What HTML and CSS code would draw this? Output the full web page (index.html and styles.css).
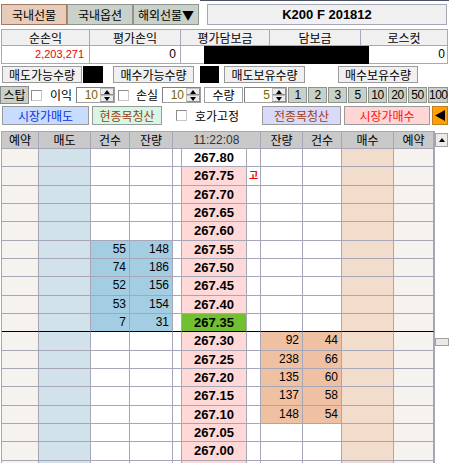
FILE: index.html
```html
<!DOCTYPE html>
<html lang="ko">
<head>
<meta charset="utf-8">
<title>호가주문</title>
<link rel="stylesheet" href="styles.css">
</head>
<body>
<div class="topline"></div>
<div class="row-a">
  <div class="tab on">국내선물</div>
  <div class="tab">국내옵션</div>
  <div class="tab">해외선물▼</div>
  <div class="k200">K200 F 201812</div>
</div>

<div class="pl-head">
  <div>순손익</div><div>평가손익</div><div>평가담보금</div><div>담보금</div><div>로스컷</div>
</div>
<div class="pl-val">
  <div class="v v1 red">2,203,271</div>
  <div class="v v2">0</div>
  <div class="v v3"></div>
  <div class="blk"></div>
  <div class="v v5">0</div>
</div>

<div class="row-d">
  <div class="lbl l1">매도가능수량</div><div class="qv q1"><span class="bk"></span></div>
  <div class="lbl l2">매수가능수량</div><div class="qv q2"><span class="bk"></span></div>
  <div class="lbl l3">매도보유수량</div><div class="qv q3"></div>
  <div class="lbl l4">매수보유수량</div><div class="qv q4"></div>
</div>

<div class="row-e">
  <div class="stop">스탑</div>
  <span class="chk c1"></span><span class="txt t1">이익</span>
  <div class="spin s1"><span class="sv">10</span><span class="sb"><span class="sbh"><i class="up"></i></span><span class="sbh"><i class="dn"></i></span></span></div>
  <span class="chk c2"></span><span class="txt t2">손실</span>
  <div class="spin s2"><span class="sv">10</span><span class="sb"><span class="sbh"><i class="up"></i></span><span class="sbh"><i class="dn"></i></span></span></div>
  <div class="qlabel">수량</div>
  <div class="spin s3"><span class="sv">5</span><span class="sb"><span class="sbh"><i class="up"></i></span><span class="sbh"><i class="dn"></i></span></span></div>
  <div class="qbtns"><span>1</span><span>2</span><span>3</span><span>5</span><span>10</span><span>20</span><span>50</span><span>100</span></div>
</div>

<div class="row-f">
  <div class="ob mkt-sell">시장가매도</div>
  <div class="ob clr-cur">현종목청산</div>
  <span class="chk c3"></span><span class="txt t3">호가고정</span>
  <div class="ob clr-all">전종목청산</div>
  <div class="ob mkt-buy">시장가매수</div>
  <div class="ob arrow"><svg width="14" height="17" viewBox="0 0 14 17"><polygon points="2,8.5 12,3 12,14" fill="#000"/></svg></div>
</div>

<div class="board">
  <div class="grid">
    <div class="row hd">
      <span class="c">예약</span><span class="c">매도</span><span class="c">건수</span><span class="c">잔량</span><span class="c time">11:22:08</span><span class="c">잔량</span><span class="c">건수</span><span class="c">매수</span><span class="c">예약</span>
    </div>
    <div class="row">
      <span class="c rv"></span><span class="c sd"></span><span class="c n"></span><span class="c n"></span><span class="c"></span><span class="c pr top">267.80</span><span class="c mk"></span><span class="c n"></span><span class="c n"></span><span class="c bd"></span><span class="c rv"></span>
    </div>
    <div class="row">
      <span class="c rv"></span><span class="c sd"></span><span class="c n"></span><span class="c n"></span><span class="c"></span><span class="c pr">267.75</span><span class="c mk">고</span><span class="c n"></span><span class="c n"></span><span class="c bd"></span><span class="c rv"></span>
    </div>
    <div class="row">
      <span class="c rv"></span><span class="c sd"></span><span class="c n"></span><span class="c n"></span><span class="c"></span><span class="c pr">267.70</span><span class="c mk"></span><span class="c n"></span><span class="c n"></span><span class="c bd"></span><span class="c rv"></span>
    </div>
    <div class="row">
      <span class="c rv"></span><span class="c sd"></span><span class="c n"></span><span class="c n"></span><span class="c"></span><span class="c pr">267.65</span><span class="c mk"></span><span class="c n"></span><span class="c n"></span><span class="c bd"></span><span class="c rv"></span>
    </div>
    <div class="row">
      <span class="c rv"></span><span class="c sd"></span><span class="c n"></span><span class="c n"></span><span class="c"></span><span class="c pr">267.60</span><span class="c mk"></span><span class="c n"></span><span class="c n"></span><span class="c bd"></span><span class="c rv"></span>
    </div>
    <div class="row">
      <span class="c rv"></span><span class="c sd"></span><span class="c n fs">55</span><span class="c n fs">148</span><span class="c"></span><span class="c pr">267.55</span><span class="c mk"></span><span class="c n"></span><span class="c n"></span><span class="c bd"></span><span class="c rv"></span>
    </div>
    <div class="row">
      <span class="c rv"></span><span class="c sd"></span><span class="c n fs">74</span><span class="c n fs">186</span><span class="c"></span><span class="c pr">267.50</span><span class="c mk"></span><span class="c n"></span><span class="c n"></span><span class="c bd"></span><span class="c rv"></span>
    </div>
    <div class="row">
      <span class="c rv"></span><span class="c sd"></span><span class="c n fs">52</span><span class="c n fs">156</span><span class="c"></span><span class="c pr">267.45</span><span class="c mk"></span><span class="c n"></span><span class="c n"></span><span class="c bd"></span><span class="c rv"></span>
    </div>
    <div class="row">
      <span class="c rv"></span><span class="c sd"></span><span class="c n fs">53</span><span class="c n fs">154</span><span class="c"></span><span class="c pr">267.40</span><span class="c mk"></span><span class="c n"></span><span class="c n"></span><span class="c bd"></span><span class="c rv"></span>
    </div>
    <div class="row sep">
      <span class="c rv"></span><span class="c sd"></span><span class="c n fs">7</span><span class="c n fs">31</span><span class="c"></span><span class="c pr cur">267.35</span><span class="c mk"></span><span class="c n"></span><span class="c n"></span><span class="c bd"></span><span class="c rv"></span>
    </div>
    <div class="row">
      <span class="c rv"></span><span class="c sd"></span><span class="c n"></span><span class="c n"></span><span class="c"></span><span class="c pr">267.30</span><span class="c mk"></span><span class="c n fb">92</span><span class="c n fb">44</span><span class="c bd"></span><span class="c rv"></span>
    </div>
    <div class="row">
      <span class="c rv"></span><span class="c sd"></span><span class="c n"></span><span class="c n"></span><span class="c"></span><span class="c pr">267.25</span><span class="c mk"></span><span class="c n fb">238</span><span class="c n fb">66</span><span class="c bd"></span><span class="c rv"></span>
    </div>
    <div class="row">
      <span class="c rv"></span><span class="c sd"></span><span class="c n"></span><span class="c n"></span><span class="c"></span><span class="c pr">267.20</span><span class="c mk"></span><span class="c n fb">135</span><span class="c n fb">60</span><span class="c bd"></span><span class="c rv"></span>
    </div>
    <div class="row">
      <span class="c rv"></span><span class="c sd"></span><span class="c n"></span><span class="c n"></span><span class="c"></span><span class="c pr">267.15</span><span class="c mk"></span><span class="c n fb">137</span><span class="c n fb">58</span><span class="c bd"></span><span class="c rv"></span>
    </div>
    <div class="row">
      <span class="c rv"></span><span class="c sd"></span><span class="c n"></span><span class="c n"></span><span class="c"></span><span class="c pr">267.10</span><span class="c mk"></span><span class="c n fb">148</span><span class="c n fb">54</span><span class="c bd"></span><span class="c rv"></span>
    </div>
    <div class="row">
      <span class="c rv"></span><span class="c sd"></span><span class="c n"></span><span class="c n"></span><span class="c"></span><span class="c pr">267.05</span><span class="c mk"></span><span class="c n"></span><span class="c n"></span><span class="c bd"></span><span class="c rv"></span>
    </div>
    <div class="row">
      <span class="c rv"></span><span class="c sd"></span><span class="c n"></span><span class="c n"></span><span class="c"></span><span class="c pr">267.00</span><span class="c mk"></span><span class="c n"></span><span class="c n"></span><span class="c bd"></span><span class="c rv"></span>
    </div>
    <div class="row">
      <span class="c rv"></span><span class="c sd"></span><span class="c n"></span><span class="c n"></span><span class="c"></span><span class="c pr"></span><span class="c mk"></span><span class="c n"></span><span class="c n"></span><span class="c bd"></span><span class="c rv"></span>
    </div>
  </div>
  <div class="vscroll">
    <div class="sc-up"><i class="up"></i></div>
    <div class="sc-thumb"></div>
  </div>
</div>
</body>
</html>
```

FILE: styles.css
```css
html, body {
  margin: 0;
  padding: 0;
}
body {
  width: 449px;
  height: 463px;
  overflow: hidden;
  background: #fff;
  color: #000;
  font-family: "Noto Sans CJK KR", "Noto Sans", sans-serif;
  font-size: 12px;
}

.topline {
  margin-left: 200px;
  height: 1px;
  background: #4a5264;
}

/* top tabs */
.row-a {
  display: flex;
  margin-top: 3px;
  height: 21px;
}
.tab {
  box-sizing: border-box;
  width: 66px;
  height: 21px;
  border: 1px solid #8e948e;
  background: #c9d1c9;
  text-align: center;
  line-height: 19px;
  font-size: 12px;
}
.tab.on {
  margin-left: 1px;
  background: #e7ccb9;
  border-color: #a07a66;
}
.k200 {
  box-sizing: border-box;
  margin-left: 8px;
  width: 240px;
  height: 21px;
  border: 1px solid #a6a6b6;
  background: #f0f0f0;
  font-family: "Liberation Sans", sans-serif;
  font-weight: bold;
  font-size: 13px;
  line-height: 19px;
  text-align: center;
}

/* P&L table */
.pl-head {
  display: grid;
  grid-template-columns: 88px 91px 89px 91px 87px;
  margin-top: 4px;
  margin-left: 1px;
  border-left: 1px solid #a8a8b8;
  border-top: 1px solid #a8a8b8;
  width: 446px;
}
.pl-head > div {
  box-sizing: border-box;
  height: 16px;
  line-height: 15px;
  border-right: 1px solid #a8a8b8;
  border-bottom: 1px solid #a8a8b8;
  background: #f0f0f0;
  text-align: center;
}
.pl-val {
  display: flex;
  margin-left: 1px;
  border-left: 1px solid #a8a8b8;
  height: 18px;
}
.pl-val .v {
  box-sizing: border-box;
  height: 18px;
  border-right: 1px solid #a8a8b8;
  border-bottom: 1px solid #a8a8b8;
  font-family: "Liberation Sans", sans-serif;
  font-size: 12px;
  line-height: 17px;
  text-align: right;
  padding-right: 3px;
}
.pl-val .v1 { width: 88px; font-size: 11px; padding-right: 5px; }
.pl-val .v2 { width: 91px; padding-right: 4px; }
.pl-val .v3 { width: 23px; border-right: 0; }
.pl-val .v5 { width: 79px; padding-right: 2px; }
.pl-val .blk {
  width: 165px;
  height: 18px;
  background: #000;
}
.red { color: #f00000; }

/* available quantities */
.row-d {
  display: flex;
  margin-top: 2px;
  height: 17px;
}
.lbl {
  box-sizing: border-box;
  height: 17px;
  border: 1px solid #9a9a9a;
  background: #f0f0f0;
  text-align: center;
  line-height: 15px;
  font-size: 12px;
}
.l1 { margin-left: 2px; width: 80px; }
.l2 { margin-left: 1px; width: 81px; }
.l3 { width: 81px; }
.l4 { margin-left: 2px; width: 80px; }
.qv {
  display: flex;
  height: 17px;
}
.q1 { width: 30px; padding-left: 1px; box-sizing: border-box; }
.q2 { width: 30px; padding-left: 6px; box-sizing: border-box; }
.q3 { width: 31px; }
.q4 { width: 30px; }
.q1 .bk { width: 20px; height: 17px; background: #000; }
.q2 .bk { width: 19px; height: 17px; background: #000; }

/* stop row */
.row-e {
  display: flex;
  align-items: center;
  margin-top: 3px;
  height: 18px;
}
.stop {
  box-sizing: border-box;
  width: 29px;
  height: 18px;
  border: 1px solid #8a8a8a;
  background: #c8d0c8;
  text-align: center;
  line-height: 16px;
}
.chk {
  box-sizing: border-box;
  width: 11px;
  height: 11px;
  background: #fff;
  border: 1px solid #8c8c8c;
  border-right-color: #c8c8c8;
  border-bottom-color: #c8c8c8;
}
.txt { line-height: 16px; white-space: nowrap; }
.c1 { margin-left: 2px; }
.t1 { margin-left: 8px; width: 23px; }
.s1 { margin-left: 3px; width: 39px; }
.c2 { margin-left: 3px; }
.t2 { margin-left: 7px; width: 24px; }
.s2 { margin-left: 2px; width: 39px; }
.spin {
  box-sizing: border-box;
  display: flex;
  height: 16px;
  border: 1px solid #a0a0a0;
  border-top-color: #808080;
  border-left-color: #808080;
  background: #fff;
}
.s3 { margin-left: 1px; width: 43px; }
.sv {
  flex: 1;
  text-align: right;
  padding-right: 2px;
  font-family: "Liberation Sans", sans-serif;
  font-size: 12px;
  line-height: 14px;
  color: #7a6400;
}
.sb {
  display: flex;
  flex-direction: column;
  width: 14px;
}
.sbh {
  flex: 1;
  display: flex;
  align-items: center;
  justify-content: center;
  background: #ececec;
  border: 1px solid #c0c0c0;
  border-right-color: #909090;
  border-bottom-color: #909090;
}
.up {
  width: 0;
  height: 0;
  border-left: 3px solid transparent;
  border-right: 3px solid transparent;
  border-bottom: 4px solid #000;
}
.dn {
  width: 0;
  height: 0;
  border-left: 3px solid transparent;
  border-right: 3px solid transparent;
  border-top: 4px solid #000;
}
.qlabel {
  box-sizing: border-box;
  margin-left: 3px;
  width: 39px;
  height: 16px;
  border: 1px solid #a0a0a0;
  background: #fff;
  text-align: center;
  line-height: 14px;
}
.qbtns {
  display: flex;
  gap: 1px;
  margin-left: 1px;
}
.qbtns span {
  box-sizing: border-box;
  width: 19px;
  height: 16px;
  border: 1px solid #8e948e;
  background: #c8d0c8;
  text-align: center;
  font-family: "Liberation Sans", sans-serif;
  font-size: 12px;
  line-height: 14px;
  letter-spacing: -0.5px;
}
.qbtns span:last-child { width: 20px; }

/* order buttons */
.row-f {
  display: flex;
  align-items: center;
  margin-top: 2px;
  height: 19px;
}
.ob {
  box-sizing: border-box;
  height: 19px;
  border: 1px solid #9a9a9a;
  text-align: center;
  line-height: 17px;
  font-size: 12px;
}
.mkt-sell { margin-left: 2px; width: 87px; background: #c7dcff; color: #1030e0; }
.clr-cur { margin-left: 3px; width: 70px; background: #d6f7e6; color: #a04010; }
.c3 { margin-left: 14px; }
.t3 { margin-left: 8px; width: 50px; }
.clr-all { margin-left: 17px; width: 79px; background: #d9d9fa; color: #a04010; }
.mkt-buy { margin-left: 3px; width: 86px; background: #ffd6d6; color: #ff1010; }
.arrow {
  margin-left: 2px;
  width: 16px;
  background: #ffa200;
  border-color: #c08020;
  display: flex;
  align-items: center;
  justify-content: center;
}
.arrow svg { display: block; }

/* order book */
.board {
  display: flex;
  margin-top: 6px;
}
.grid {
  display: grid;
  grid-template-columns: 37px 52px 39px 43px 9px 65px 14px 42px 39px 52px 40px;
  grid-template-rows: 17px;
  grid-auto-rows: 18.333px;
  margin-left: 1px;
  border-left: 1px solid #a6a6b6;
  border-top: 1px solid #a6a6b6;
  border-right: 1px solid #a6a6b6;
}
.row { display: contents; }
.c {
  box-sizing: border-box;
  border-right: 1px solid #a6a6b6;
  border-bottom: 1px solid #a6a6b6;
  background: #fff;
  overflow: hidden;
  white-space: nowrap;
}
.hd .c {
  background: #c9c9c9;
  text-align: center;
  line-height: 16px;
  font-size: 12px;
}
.hd .time {
  grid-column: span 3;
  font-family: "Liberation Sans", sans-serif;
  color: #333;
}
.rv { background: #f6f3ef; }
.sd { background: #d2e2ea; }
.bd { background: #f2dccb; }
.n {
  text-align: right;
  padding-right: 3px;
  font-family: "Liberation Sans", sans-serif;
  font-size: 12px;
  line-height: 17px;
}
.fs { background: #a3cde3; }
.fb { background: #f0c0a3; }
.pr {
  background: #ffd8d8;
  text-align: center;
  font-family: "Liberation Sans", sans-serif;
  font-weight: bold;
  font-size: 13px;
  line-height: 17px;
}
.pr.top { background: #fff; }
.pr.cur { background: #70c032; }
.mk {
  color: #f00000;
  font-weight: bold;
  font-size: 10px;
  line-height: 15px;
  text-align: center;
}
.sep .c { border-bottom-color: #000; }

.vscroll {
  width: 15px;
  display: flex;
  flex-direction: column;
}
.sc-up {
  box-sizing: border-box;
  margin-top: 2px;
  width: 13px;
  height: 14px;
  border: 1px solid #aaa2a2;
  background: #eeeaea;
  display: flex;
  align-items: center;
  justify-content: center;
}
.sc-thumb {
  box-sizing: border-box;
  margin-top: 191px;
  width: 14px;
  height: 8px;
  border: 1px solid #a49e9e;
  background: #ece8e8;
}
```
